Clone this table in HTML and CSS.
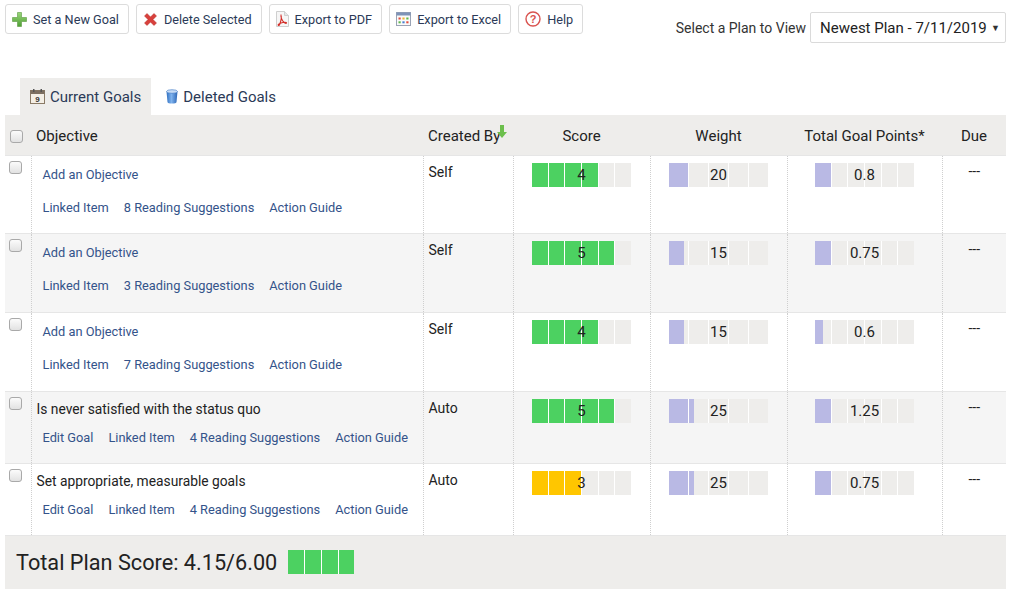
FILE: index.html
```html
<!DOCTYPE html>
<html>
<head>
<meta charset="utf-8">
<link rel="stylesheet" href="styles.css">
</head>
<body>
<div class="page">
  <div class="top">
    <div class="toolbar">
      <div class="btn">
        <svg width="15" height="15" viewBox="0 0 15 15"><defs><linearGradient id="gp" x1="0" y1="0" x2="0" y2="1"><stop offset="0" stop-color="#9ad67a"/><stop offset="1" stop-color="#4f9f35"/></linearGradient></defs><path d="M5.5 0.5h4v5h5v4h-5v5h-4v-5h-5v-4h5z" fill="url(#gp)" stroke="#5a9a40" stroke-width="0.6" stroke-linejoin="round"/></svg>
        <span>Set a New Goal</span>
      </div>
      <div class="btn">
        <svg width="15" height="15" viewBox="0 0 15 15"><path d="M1.5 4L4 1.5 7.5 5 11 1.5 13.5 4 10 7.5 13.5 11 11 13.5 7.5 10 4 13.5 1.5 11 5 7.5z" fill="#d8403c" stroke="#b52a27" stroke-width="0.5" stroke-linejoin="round"/></svg>
        <span>Delete Selected</span>
      </div>
      <div class="btn">
        <svg width="13" height="16" viewBox="0 0 13 16"><path d="M0.5 0.5h8l4 4v11h-12z" fill="#f6f6f6" stroke="#cfcfcf"/><path d="M8.5 0.5v4h4" fill="#e6e6e6" stroke="#cfcfcf"/><path d="M5.5 4c-1 0-0.5 3 1 5.5s3.5 3.5 4 2.5-3-1-5.5 0-3.5 2-2.5 2.5 2-3.5 2.5-5.5 0.5-5-0.5-5z" fill="none" stroke="#d3302b" stroke-width="1.1"/></svg>
        <span>Export to PDF</span>
      </div>
      <div class="btn">
        <svg width="15" height="14" viewBox="0 0 15 14"><rect x="0.5" y="0.5" width="14" height="13" fill="#fafafa" stroke="#9aa3b5"/><rect x="0.5" y="0.5" width="14" height="3" fill="#7e93b8"/><rect x="2.5" y="5.5" width="2.2" height="2" fill="#e24a3b"/><rect x="6.4" y="5.5" width="2.2" height="2" fill="#f2b632"/><rect x="10.3" y="5.5" width="2.2" height="2" fill="#5db84a"/><rect x="2.5" y="9.3" width="2.2" height="2" fill="#5db84a"/><rect x="6.4" y="9.3" width="2.2" height="2" fill="#4a7fd0"/><rect x="10.3" y="9.3" width="2.2" height="2" fill="#e24a3b"/></svg>
        <span>Export to Excel</span>
      </div>
      <div class="btn">
        <svg width="16" height="16" viewBox="0 0 16 16"><circle cx="8" cy="8" r="7" fill="#fff" stroke="#d9534f" stroke-width="1.4"/><text x="8" y="12" text-anchor="middle" font-family="Liberation Sans, Arial, sans-serif" font-size="11" font-weight="bold" fill="#d9534f">?</text></svg>
        <span>Help</span>
      </div>
    </div>
    <div class="plan">
      <span class="plan-label">Select a Plan to View</span>
      <div class="select"><span>Newest Plan - 7/11/2019</span><span class="caret">▼</span></div>
    </div>
  </div>

  <div class="tabs">
    <div class="tab active">
      <svg width="15" height="15" viewBox="0 0 15 15"><rect x="0.5" y="1.5" width="14" height="13" fill="#f4efe6" stroke="#8a7a66"/><rect x="0.5" y="1.5" width="14" height="3.5" fill="#7d6f61"/><rect x="3" y="0" width="1.5" height="3" fill="#555"/><rect x="10.5" y="0" width="1.5" height="3" fill="#555"/><text x="7.5" y="13" text-anchor="middle" font-family="Liberation Sans, Arial, sans-serif" font-size="8" font-weight="bold" fill="#333">9</text></svg>
      <span>Current Goals</span>
    </div>
    <div class="tab second">
      <svg width="12" height="15" viewBox="0 0 12 15"><defs><linearGradient id="gb" x1="0" y1="0" x2="1" y2="0"><stop offset="0" stop-color="#2f6fc0"/><stop offset="0.45" stop-color="#7fb3ee"/><stop offset="1" stop-color="#2d66b5"/></linearGradient></defs><path d="M0.5 2.5h11l-1 10.5c0 1-2 1.5-4.5 1.5s-4.5-0.5-4.5-1.5z" fill="url(#gb)"/><ellipse cx="6" cy="2.5" rx="5.5" ry="1.8" fill="#c7dcf5" stroke="#3a76c4" stroke-width="0.6"/></svg>
      <span>Deleted Goals</span>
    </div>
  </div>

  <table class="goals">
    <colgroup>
      <col style="width:26px"><col style="width:392px"><col style="width:90px"><col style="width:137px"><col style="width:137px"><col style="width:155px"><col style="width:64px">
    </colgroup>
    <thead>
      <tr>
        <th class="cb-h"><span class="cb"></span></th>
        <th class="left">Objective</th>
        <th class="left created-h">Created By<svg class="sort" width="10" height="13" viewBox="0 0 10 13"><path d="M3 0h4v7h3l-5 6-5-6h3z" fill="#6cbf4c"/></svg></th>
        <th>Score</th>
        <th>Weight</th>
        <th>Total Goal Points*</th>
        <th>Due</th>
      </tr>
    </thead>
    <tbody>
      <tr class="r-first">
        <td class="cbc"><span class="cb"></span></td>
        <td class="obj">
          <div class="title-link">Add an Objective</div>
          <div class="links l-tall"><span>Linked Item</span><span>8 Reading Suggestions</span><span>Action Guide</span></div>
        </td>
        <td class="by">Self</td>
        <td class="metric"><div class="bar score" style="--p:66px"><i></i><i></i><i></i><i></i><i></i><i></i><b>4</b></div></td>
        <td class="metric"><div class="bar five" style="--p:19.8px"><i></i><i></i><i></i><i></i><i></i><b>20</b></div></td>
        <td class="metric"><div class="bar pts" style="--p:16.5px"><i></i><i></i><i></i><i></i><i></i><i></i><b>0.8</b></div></td>
        <td class="due">---</td>
      </tr>
      <tr class="r-tall alt">
        <td class="cbc"><span class="cb"></span></td>
        <td class="obj">
          <div class="title-link">Add an Objective</div>
          <div class="links l-tall"><span>Linked Item</span><span>3 Reading Suggestions</span><span>Action Guide</span></div>
        </td>
        <td class="by">Self</td>
        <td class="metric"><div class="bar score" style="--p:82.5px"><i></i><i></i><i></i><i></i><i></i><i></i><b>5</b></div></td>
        <td class="metric"><div class="bar five" style="--p:14.85px"><i></i><i></i><i></i><i></i><i></i><b>15</b></div></td>
        <td class="metric"><div class="bar pts" style="--p:16.5px"><i></i><i></i><i></i><i></i><i></i><i></i><b>0.75</b></div></td>
        <td class="due">---</td>
      </tr>
      <tr class="r-tall">
        <td class="cbc"><span class="cb"></span></td>
        <td class="obj">
          <div class="title-link">Add an Objective</div>
          <div class="links l-tall"><span>Linked Item</span><span>7 Reading Suggestions</span><span>Action Guide</span></div>
        </td>
        <td class="by">Self</td>
        <td class="metric"><div class="bar score" style="--p:66px"><i></i><i></i><i></i><i></i><i></i><i></i><b>4</b></div></td>
        <td class="metric"><div class="bar five" style="--p:14.85px"><i></i><i></i><i></i><i></i><i></i><b>15</b></div></td>
        <td class="metric"><div class="bar pts" style="--p:8px"><i></i><i></i><i></i><i></i><i></i><i></i><b>0.6</b></div></td>
        <td class="due">---</td>
      </tr>
      <tr class="r-short alt">
        <td class="cbc"><span class="cb"></span></td>
        <td class="obj">
          <div class="title">Is never satisfied with the status quo</div>
          <div class="links l-short"><span>Edit Goal</span><span>Linked Item</span><span>4 Reading Suggestions</span><span>Action Guide</span></div>
        </td>
        <td class="by">Auto</td>
        <td class="metric"><div class="bar score" style="--p:82.5px"><i></i><i></i><i></i><i></i><i></i><i></i><b>5</b></div></td>
        <td class="metric"><div class="bar five" style="--p:24.75px"><i></i><i></i><i></i><i></i><i></i><b>25</b></div></td>
        <td class="metric"><div class="bar pts" style="--p:16.5px"><i></i><i></i><i></i><i></i><i></i><i></i><b>1.25</b></div></td>
        <td class="due">---</td>
      </tr>
      <tr class="r-short">
        <td class="cbc"><span class="cb"></span></td>
        <td class="obj">
          <div class="title">Set appropriate, measurable goals</div>
          <div class="links l-short"><span>Edit Goal</span><span>Linked Item</span><span>4 Reading Suggestions</span><span>Action Guide</span></div>
        </td>
        <td class="by">Auto</td>
        <td class="metric"><div class="bar score warn" style="--p:49.5px"><i></i><i></i><i></i><i></i><i></i><i></i><b>3</b></div></td>
        <td class="metric"><div class="bar five" style="--p:24.75px"><i></i><i></i><i></i><i></i><i></i><b>25</b></div></td>
        <td class="metric"><div class="bar pts" style="--p:16.5px"><i></i><i></i><i></i><i></i><i></i><i></i><b>0.75</b></div></td>
        <td class="due">---</td>
      </tr>
    </tbody>
    <tfoot>
      <tr>
        <td colspan="7" class="total">
          <div class="total-row"><span>Total Plan Score: 4.15/6.00</span><div class="bar total-bar" style="--p:66px"><i></i><i></i><i></i><i></i></div></div>
        </td>
      </tr>
    </tfoot>
  </table>
</div>
</body>
</html>
```
FILE: styles.css
```css
* { box-sizing: border-box; }
body {
  margin: 0;
  font-family: Roboto, "Liberation Sans", Arial, sans-serif;
  color: #222;
  background: #fff;
}
.page { padding: 4px 3px 0 5px; }

.top {
  display: flex;
  justify-content: space-between;
  align-items: flex-start;
}
.toolbar { display: flex; gap: 7px; }
.btn {
  display: flex;
  align-items: center;
  gap: 6px;
  height: 30px;
  padding: 0 9px 0 6px;
  border: 1px solid #dcdcdc;
  border-radius: 3px;
  background: #fff;
  font-size: 12.7px;
  color: #2b3a57;
}
.btn svg { display: block; flex: none; }

.plan {
  display: flex;
  align-items: center;
  gap: 4px;
  margin-top: 8px;
}
.plan-label { font-size: 14px; color: #333; }
.select {
  width: 196px;
  height: 31px;
  border: 1px solid #dadada;
  border-radius: 2px;
  display: flex;
  align-items: center;
  justify-content: space-between;
  padding: 0 5px 0 9px;
  font-size: 15px;
  color: #222;
}
.caret { font-size: 9px; color: #333; }

.tabs {
  display: flex;
  margin-top: 35px;
  padding-left: 15px;
}
.tab {
  display: flex;
  align-items: center;
  gap: 5px;
  height: 37px;
  padding: 0 10px;
  font-size: 15px;
  color: #2b3a57;
}
.tab svg { display: block; flex: none; }
.tab.active { background: #eeedeb; }
.tab.second { padding-left: 15px; }

.goals {
  width: 1001px;
  border-collapse: collapse;
  table-layout: fixed;
}
.goals th {
  background: #eeedeb;
  height: 40px;
  font-weight: normal;
  font-size: 15px;
  line-height: 18px;
  color: #222;
  text-align: center;
  vertical-align: top;
  padding: 12px 0 0 0;
}
.goals th.left { text-align: left; padding-left: 5px; }
.goals th.cb-h { text-align: left; padding: 15px 0 0 5px; }
.created-h { white-space: nowrap; }
.sort { position: relative; top: -3px; vertical-align: baseline; margin-left: -3px; }

.goals td {
  vertical-align: top;
  padding: 0;
  border-top: 1px solid #e6e6e6;
  border-left: 1px dotted #cfcfcf;
}
.goals td.cbc { border-left: none; padding: 5px 0 0 4px; }
.goals tr.alt td { background: #f5f5f5; }
.r-first td { height: 78px; }
.r-tall td { height: 79px; }
.r-short td { height: 72px; }

.cb {
  display: block;
  width: 13px;
  height: 13px;
  border: 1px solid #a9a9a9;
  border-radius: 3px;
  background: linear-gradient(#fbfbfb, #e2e2e2);
}

.obj { padding: 7px 5px 0 5px !important; }
.title { font-size: 13.8px; line-height: 20px; color: #222; }
.title-link {
  font-size: 12.8px;
  line-height: 20px;
  margin-top: 2px;
  padding-left: 6px;
  color: #34538a;
}
.links {
  display: flex;
  gap: 15px;
  padding-left: 6px;
  font-size: 12.8px;
  line-height: 20px;
  color: #34538a;
}
.l-tall { margin-top: 13px; }
.l-short { margin-top: 9px; }

.by {
  padding: 6px 5px 0 5px !important;
  font-size: 14px;
  line-height: 20px;
}
.due {
  padding-top: 5px !important;
  font-size: 14px;
  line-height: 20px;
  text-align: center;
}
.metric { padding-top: 7px !important; }

.bar {
  --c: #4cd161;
  position: relative;
  display: flex;
  width: 99px;
  height: 24px;
  margin: 0 auto;
  background: linear-gradient(to right, var(--c) var(--p), #eeedeb var(--p));
}
.bar i { flex: 1; display: block; }
.bar i + i { border-left: 1px solid #fff; }
.bar b {
  position: absolute;
  inset: 0;
  font-weight: normal;
  font-size: 15px;
  line-height: 24px;
  text-align: center;
  color: #222;
}
.bar.warn { --c: #ffc600; }
.bar.five, .bar.pts { --c: #b9b9e4; }

.goals td.total {
  background: #eeedeb;
  height: 54px;
  border-left: none;
  padding: 0 0 0 11px;
  vertical-align: middle;
}
.total-row {
  display: flex;
  align-items: center;
  gap: 11px;
  font-size: 21.7px;
  color: #222;
}
.bar.total-bar { width: 66px; margin: 0; }
```
